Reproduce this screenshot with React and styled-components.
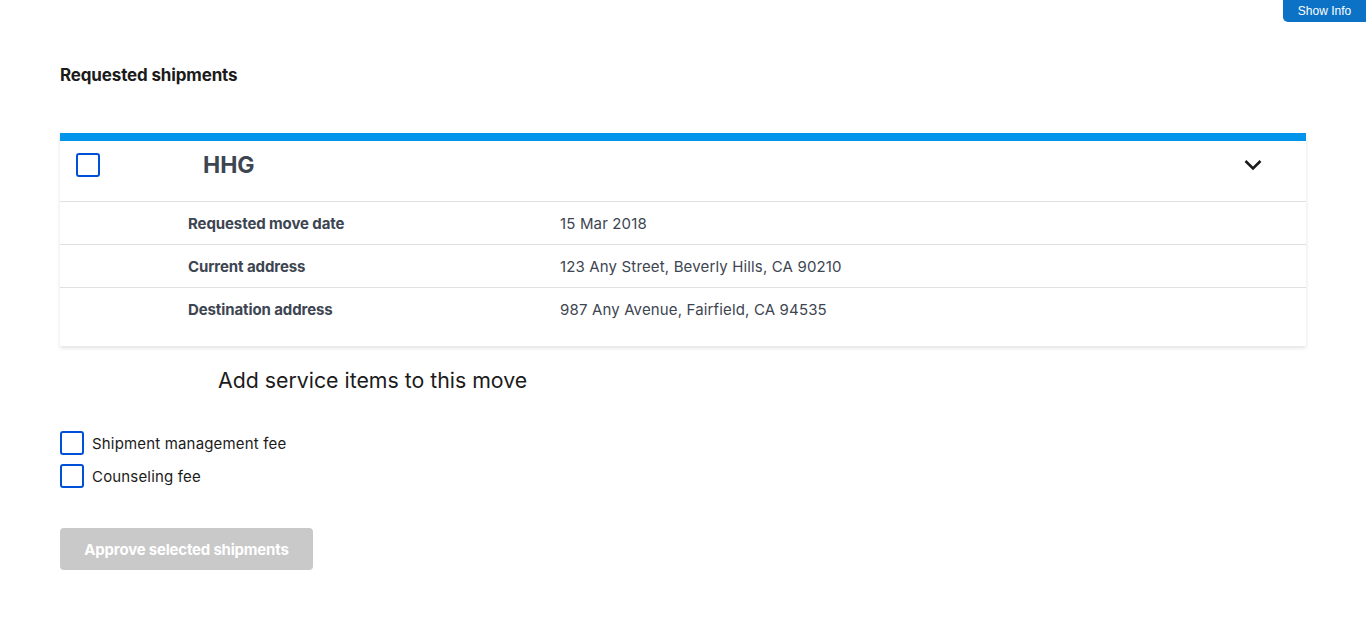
import React from 'react';
import styled, { createGlobalStyle } from 'styled-components';

const GlobalStyle = createGlobalStyle`
  body {
    margin: 0;
    font-family: 'Inter', 'Liberation Sans', sans-serif;
    color: #1b1b1b;
    background: #fff;
  }
`;

const Page = styled.div`
  position: relative;
  padding: 0 60px;
  min-height: 639px;
  box-sizing: border-box;
`;

const InfoButton = styled.button`
  position: absolute;
  top: 0;
  right: 0;
  width: 83px;
  height: 22px;
  border: none;
  border-radius: 0 0 0 5px;
  background: #0b72c6;
  color: #fff;
  font-family: 'Liberation Sans', Arial, sans-serif;
  font-size: 12px;
  padding: 0;
  cursor: pointer;
`;

const Title = styled.h2`
  margin: 0;
  padding-top: 64px;
  font-size: 17px;
  font-weight: 700;
  line-height: 22px;
  letter-spacing: -0.15px;
  color: #1b1b1b;
`;

const Card = styled.section`
  margin-top: 47px;
  border-top: 8px solid #0094ea;
  background: #fff;
  box-shadow: 0 2px 4px rgba(0, 0, 0, 0.12);
  padding-bottom: 16px;
`;

const CardHeader = styled.div`
  display: flex;
  align-items: center;
  height: 24px;
  padding: 12px 43px 24px 16px;
  border-bottom: 1px solid #dfe1e2;
`;

const Box = styled.span`
  display: inline-block;
  flex: none;
  width: 24px;
  height: 24px;
  box-sizing: border-box;
  border: 2px solid #0050d8;
  border-radius: 3px;
  background: #fff;
`;

const ShipmentType = styled.h3`
  margin: 0 0 0 103px;
  flex: 1;
  font-size: 23px;
  font-weight: 700;
  line-height: 24px;
  color: #3d4551;
`;

const Chevron = styled.svg`
  width: 20px;
  height: 20px;
`;

const Row = styled.div`
  display: grid;
  grid-template-columns: 128px 372px 1fr;
  align-items: center;
  height: 42px;
  border-bottom: ${(p) => (p.last ? 'none' : '1px solid #dfe1e2')};
  font-size: 15px;
  color: #3d4551;
`;

const Label = styled.span`
  grid-column: 2;
  font-weight: 700;
  letter-spacing: -0.1px;
`;

const Value = styled.span`
  grid-column: 3;
  letter-spacing: 0.15px;
`;

const SubTitle = styled.h3`
  margin: 18px 0 0;
  padding-left: 158px;
  font-size: 21.3px;
  font-weight: 400;
  line-height: 32px;
  color: #1b1b1b;
`;

const Options = styled.div`
  display: flex;
  flex-direction: column;
  gap: 9px;
  margin-top: 35px;
`;

const Option = styled.label`
  display: flex;
  align-items: center;
  gap: 8px;
  font-size: 15px;
  letter-spacing: 0.17px;
  color: #1b1b1b;
`;

const ApproveButton = styled.button`
  margin-top: 40px;
  width: 253px;
  height: 42px;
  border: none;
  border-radius: 4px;
  background: #c9c9c9;
  color: #fff;
  font-family: inherit;
  font-size: 15px;
  font-weight: 700;
  letter-spacing: -0.2px;
`;

const details = [
  ['Requested move date', '15 Mar 2018'],
  ['Current address', '123 Any Street, Beverly Hills, CA 90210'],
  ['Destination address', '987 Any Avenue, Fairfield, CA 94535'],
];

export default function App() {
  return (
    <Page>
      <GlobalStyle />
      <InfoButton>Show Info</InfoButton>
      <Title>Requested shipments</Title>
      <Card>
        <CardHeader>
          <Box />
          <ShipmentType>HHG</ShipmentType>
          <Chevron viewBox="0 0 20 20">
            <path d="M2.5 6 L10 13.5 L17.5 6" fill="none" stroke="#1b1b1b" strokeWidth="2.6" />
          </Chevron>
        </CardHeader>
        {details.map(([k, v], i) => (
          <Row key={k} last={i === details.length - 1}>
            <Label>{k}</Label>
            <Value>{v}</Value>
          </Row>
        ))}
      </Card>
      <SubTitle>Add service items to this move</SubTitle>
      <Options>
        <Option><Box />Shipment management fee</Option>
        <Option><Box />Counseling fee</Option>
      </Options>
      <ApproveButton disabled>Approve selected shipments</ApproveButton>
    </Page>
  );
}
